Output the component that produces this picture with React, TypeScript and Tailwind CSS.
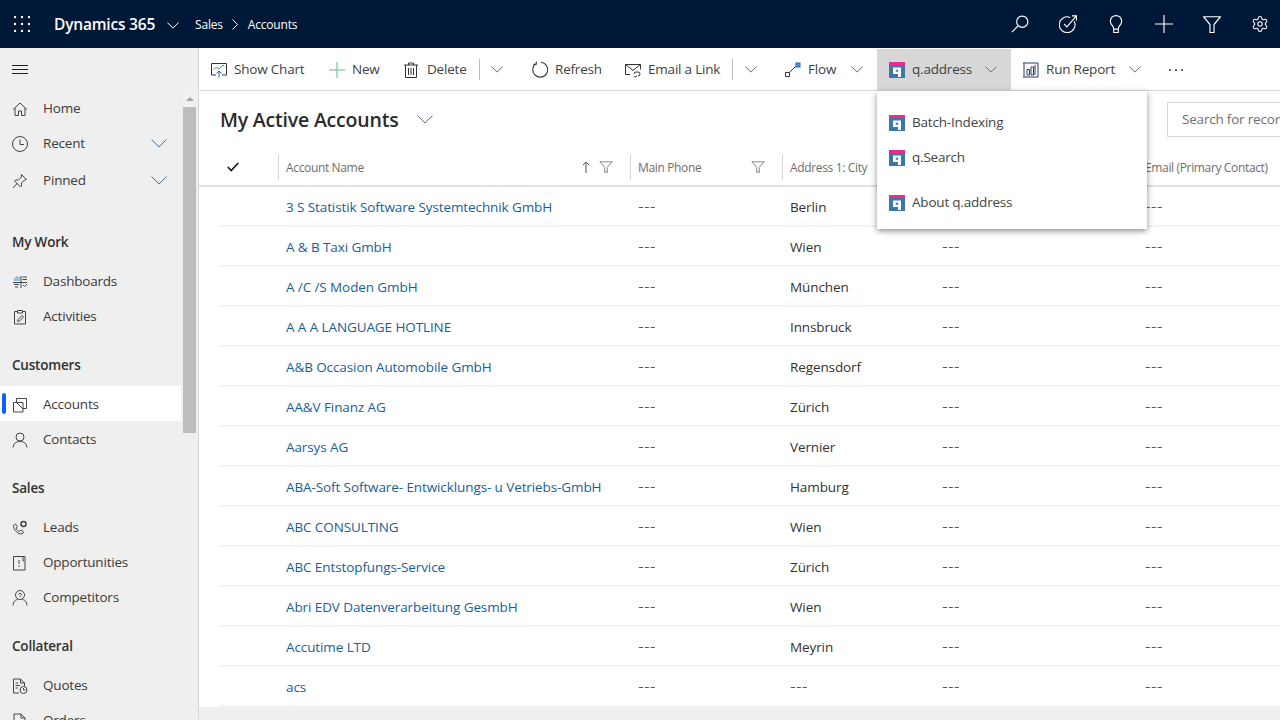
import type { ReactNode } from "react";
import { Settings } from "lucide-react";

function Ico({ size = 16, children, className = "" }: { size?: number; children: ReactNode; className?: string }) {
  return (
    <svg width={size} height={size} viewBox="0 0 16 16" fill="none" stroke="currentColor" strokeWidth="1" className={"shrink-0 " + className}>
      {children}
    </svg>
  );
}

function Chevron({ w = 12, className = "" }: { w?: number; className?: string }) {
  return (
    <svg width={w} height={w / 2 + 1} viewBox="0 0 16 9" fill="none" stroke="currentColor" strokeWidth={16 / w} className={"shrink-0 " + className}>
      <path d="M0.5 0.5 L8 8 L15.5 0.5" />
    </svg>
  );
}

function QIcon() {
  return (
    <svg width="16" height="16" viewBox="0 0 16 16" className="shrink-0">
      <rect width="16" height="16" fill="#3b78a9" />
      <rect width="16" height="3" fill="#ee2a8a" />
      <path d="M4 5.500h8V15H9v-3H4z M6.800 7.800v2h2.400v-2z" fill="#fff" fillRule="evenodd" />
    </svg>
  );
}

const navIcons: Record<string, ReactNode> = {
  Home: <path d="M1 8.500 8 2l7 6.500M3 7v7.500h3.500V10h3v4.500H13V7" />,
  Recent: (
    <>
      <circle cx="8" cy="8" r="7.500" />
      <path d="M8 3.500V8.500H12" />
    </>
  ),
  Pinned: <path d="M1 15l4.500-5M9.500 1.500l5 5-2 .5-3 3 0 3-1 1-6-6 1-1 3 0 3-3z" />,
  Dashboards: (
    <>
      <path d="M1 8.500h14M9 2v12M10.500 3H15M10.500 5.500H15" />
      <path d="M3 3.500V7M5 2V7M7 3V7" stroke="#4a90c2" />
      <path d="M2 10.500H7M3 13h3M11 11l1.500 1.500L15 10" />
    </>
  ),
  Activities: (
    <>
      <path d="M5 2.500H2.500V15h11V2.500H11M5.500 1.500h5v2.500h-5z" />
      <path d="M5.500 12.500l.5-2 4-4 1.500 1.500-4 4z" />
    </>
  ),
  Accounts: <path d="M1.500 5.500H11V15H1.500zM4.500 5.500V1.500H14.500V11.500H11M4.500 5.500 11 12" />,
  Contacts: (
    <>
      <circle cx="8" cy="5" r="4" />
      <path d="M1 15.500C1.500 11.500 4 9.500 8 9.500s6.500 2 7 6" />
    </>
  ),
  Leads: (
    <>
      <path d="M1.500 5.500 3.500 4l2 2.500-1.500 1.500c.5 1.500 2 3 3.500 3.500l1.500-1.500 2.500 2-1.500 2C6 14.500 1.500 10 1.500 5.500z" />
      <circle cx="11.500" cy="4" r="2.500" strokeWidth="1.500" />
    </>
  ),
  Opportunities: <path d="M11 1.500H1.500V15H13V1.500H11V6l1 0M7 5v4M7 10.500V12" />,
  Competitors: (
    <>
      <circle cx="8" cy="5" r="4.500" />
      <path d="M1 15.500C1.500 11.500 3 10 5.500 9.500M15 15.500c-.5-4-2-5.500-4.500-6M6.500 4.500C6.500 3 9.500 3 9.500 4.500 9.500 5.500 8 5.500 8 7" />
    </>
  ),
  Quotes: (
    <>
      <path d="M7 15H1.500V1h7l4 4v3M8.500 1v4h4M3.500 5H6M3.500 7.500H8M3.500 10H6" />
      <circle cx="11.500" cy="12" r="3.500" />
      <path d="M11.500 10v2h2" />
    </>
  ),
  Orders: (
    <>
      <path d="M2 15V1h7l4 4v10zM9 1v4h4M4.500 7.500h6M4.500 10h6" />
    </>
  ),
};

const groups = [
  { title: "My Work", items: ["Dashboards", "Activities"] },
  { title: "Customers", items: ["Accounts", "Contacts"] },
  { title: "Sales", items: ["Leads", "Opportunities", "Competitors"] },
  { title: "Collateral", items: ["Quotes", "Orders"] },
];

function NavRow({ name, active, arrow }: { name: string; active?: boolean; arrow?: boolean }) {
  return (
    <div className={"relative flex h-[35px] items-center pt-[2px] pl-[12px] pr-[14px] text-[#3b3a39] " + (active ? "bg-white" : "")}>
      {active && <div className="absolute left-[2px] top-[7px] h-[21px] w-[4px] rounded-sm bg-[#0f62fe]" />}
      <Ico className="text-[#444]">{navIcons[name]}</Ico>
      <span className="ml-[15px]">{name}</span>
      {arrow && <Chevron w={16} className="ml-auto text-[#4f6f8f]" />}
    </div>
  );
}

function Sidebar() {
  return (
    <aside className="flex w-[199px] shrink-0 flex-col border-r border-[#d8d8d8] bg-[#efefef] text-[13.5px]">
      <div className="flex h-[42px] items-center pt-[2px] pl-[12px]">
        <svg width="16" height="10" viewBox="0 0 16 10" stroke="#222" strokeWidth="1" className="shrink-0">
          <path d="M0 .5h16M0 4.500h16M0 8.500h16" />
        </svg>
      </div>
      <div className="flex min-h-0 flex-1">
        <div className="w-[181px] shrink-0">
          <NavRow name="Home" />
          <NavRow name="Recent" arrow />
          <div className="mt-[2px]">
            <NavRow name="Pinned" arrow />
          </div>
          <div className="mt-[27px]">
            {groups.map((g, i) => (
              <div key={g.title} className={i > 0 ? "mt-[14px]" : ""}>
                <div className="mb-[4px] flex h-[35px] items-center pt-[2px] pl-[12px] font-semibold text-[#323130]">{g.title}</div>
                {g.items.map((n) => (
                  <NavRow key={n} name={n} active={n === "Accounts"} />
                ))}
              </div>
            ))}
          </div>
        </div>
        <div className="ml-[2px] flex w-[13px] shrink-0 flex-col">
          <div className="flex h-[17px] items-center justify-center bg-[#f1f1f1]">
            <div className="h-0 w-0 border-x-[4px] border-b-[4px] border-x-transparent border-b-[#a6a6a6]" />
          </div>
          <div className="h-[326px] bg-[#bdbdbd]" />
        </div>
      </div>
    </aside>
  );
}

function Tool({ w, icon, label, chevron, active }: { w: number; icon: ReactNode; label: string; chevron?: boolean; active?: boolean }) {
  return (
    <div style={{ width: w }} className={"flex h-full shrink-0 items-center pl-[12px] " + (active ? "bg-[#d7d7d7]" : "")}>
      {icon}
      <span className="ml-[7px] whitespace-nowrap">{label}</span>
      {chevron && <Chevron className="ml-auto mr-[14px] text-[#5a6f86]" />}
    </div>
  );
}

function Sep() {
  return <div className="h-[21px] w-px shrink-0 bg-[#bdbdbd]" />;
}

function Toolbar() {
  return (
    <div className="flex h-[43px] shrink-0 items-center border-b border-[#d8d8d8] bg-white pt-px text-[13.5px] text-[#3f3f3f]">
      <Tool
        w={118}
        label="Show Chart"
        icon={
          <Ico className="text-[#333]">
            <path d="M5 13H.5V1.500h15V13H11" />
            <path d="M2.500 8l3-3 2.500 2 4-4 1.500 1.500" stroke="#3aa655" />
            <path d="M8 15.500V9M5.500 11.500 8 9l2.500 2.500" stroke="#1464b4" />
          </Ico>
        }
      />
      <Tool
        w={75}
        label="New"
        icon={
          <Ico className="text-[#8fd3a6]" size={16}>
            <path d="M8 0v16M0 8h16" strokeWidth="1.500" />
          </Ico>
        }
      />
      <Tool
        w={87}
        label="Delete"
        icon={
          <Ico className="-ml-px mr-px text-[#333]">
            <path d="M1 3h14M5.500 3V1h5v2M2.500 3v12.500h11V3M5.500 6v7M8 6v7M10.500 6v7" />
          </Ico>
        }
      />
      <Sep />
      <div className="flex w-[40px] shrink-0 pl-[11px]">
        <Chevron className="text-[#5a6f86]" />
      </div>
      <Tool
        w={93}
        label="Refresh"
        icon={
          <Ico className="-ml-[1px] text-[#333]" size={17}>
            <path d="M5 2.200A7 7 0 1 0 9.500 1.200M5 .5v2.500H2" />
          </Ico>
        }
      />
      <Tool
        w={119}
        label="Email a Link"
        icon={
          <Ico className="text-[#333]">
            <path d="M5 12.500H.5v-10h15v5M.5 2.500 8 8.500l7.500-6" />
            <path d="M9 12a2 2 0 0 1 2-2h2a2 2 0 0 1 0 4M12 13.500a2 2 0 0 1-2 1.500 2 2 0 0 1-1-1" />
          </Ico>
        }
      />
      <Sep />
      <div className="flex w-[40px] shrink-0 pl-[12px]">
        <Chevron className="text-[#5a6f86]" />
      </div>
      <Tool
        w={104}
        label="Flow"
        chevron
        icon={
          <Ico className="text-[#333]">
            <path d="M.5 10.500h4v4h-4zM4.500 10.500l6-6" />
            <rect x="11" y="1" width="4" height="4" fill="#4a9ad4" stroke="#2266aa" />
          </Ico>
        }
      />
      <Tool w={134} label="q.address" chevron active icon={<QIcon />} />
      <Tool
        w={144}
        label="Run Report"
        chevron
        icon={
          <Ico className="text-[#2b3a6b]">
            <path d="M1 1h14v14H1M1 1H0M1 15H0M1 1v14" />
            <path d="M4 7.500h2.500V13H4zM8 5h2.500v8H8zM12 3v10" />
          </Ico>
        }
      />
      <div className="ml-[14px] flex items-center gap-[4px]">
        <div className="h-[2px] w-[2px] rounded-full bg-[#333]" />
        <div className="h-[2px] w-[2px] rounded-full bg-[#333]" />
        <div className="h-[2px] w-[2px] rounded-full bg-[#333]" />
      </div>
    </div>
  );
}

const rows = [
  ["3 S Statistik Software Systemtechnik GmbH", "Berlin"],
  ["A & B Taxi GmbH", "Wien"],
  ["A /C /S Moden GmbH", "München"],
  ["A A A LANGUAGE HOTLINE", "Innsbruck"],
  ["A&B Occasion Automobile GmbH", "Regensdorf"],
  ["AA&V Finanz AG", "Zürich"],
  ["Aarsys AG", "Vernier"],
  ["ABA-Soft Software- Entwicklungs- u Vetriebs-GmbH", "Hamburg"],
  ["ABC CONSULTING", "Wien"],
  ["ABC Entstopfungs-Service", "Zürich"],
  ["Abri EDV Datenverarbeitung GesmbH", "Wien"],
  ["Accutime LTD", "Meyrin"],
  ["acs", "---"],
];

function Funnel() {
  return (
    <Ico size={14} className="text-[#777]">
      <path d="M1 2h14L9.500 8.500V14h-3V8.500z" />
    </Ico>
  );
}

function HeadCell({ w, label, children, last }: { w: number; label: string; children?: ReactNode; last?: boolean }) {
  return (
    <div style={{ width: w }} className="flex h-[26px] shrink-0 items-center pl-[7px]">
      <span className="flex-1 pt-[2px] whitespace-nowrap">{label}</span>
      {children}
      {!last && <div className="h-[26px] w-px shrink-0 bg-[#d8d8d8]" />}
    </div>
  );
}

function Dashes() {
  return <span className="text-[17px] leading-none font-light tracking-[0.5px]">---</span>;
}

function Grid() {
  return (
    <div className="flex min-h-0 flex-1 flex-col bg-white">
      <div className="flex h-[57px] shrink-0 items-center">
        <div className="flex w-[968px] shrink-0 items-center pl-[21px]">
          <span className="text-[19.5px] font-semibold text-[#2b2b2b]">My Active Accounts</span>
          <Chevron w={16} className="ml-[19px] text-[#4f6f8f]" />
        </div>
        <div className="flex h-[35px] w-[200px] shrink-0 items-center border border-[#d8d8d8] pl-[14px] text-[13.5px] whitespace-nowrap text-[#707070]">
          Search for records
        </div>
      </div>
      <div className="flex h-[39px] shrink-0 items-center border-b-2 border-[#e2e2e2] text-[12px] tracking-[-0.35px] text-[#6e6e6e]">
        <div className="flex h-[26px] w-[80px] shrink-0 items-center">
          <svg width="12" height="10" viewBox="0 0 12 10" fill="none" stroke="#111" strokeWidth="1.600" className="ml-[28px] shrink-0">
            <path d="M.8 5 4.200 8.500 11.200 1" />
          </svg>
          <div className="ml-auto h-[26px] w-px bg-[#d8d8d8]" />
        </div>
        <HeadCell w={352} label="Account Name">
          <div className="mr-[17px] flex items-center gap-[9px]">
            <svg width="8" height="12" viewBox="0 0 8 12" fill="none" stroke="#555" strokeWidth="1" className="shrink-0">
              <path d="M4 12V1M1 4l3-3 3 3" />
            </svg>
            <Funnel />
          </div>
        </HeadCell>
        <HeadCell w={152} label="Main Phone">
          <div className="mr-[17px]">
            <Funnel />
          </div>
        </HeadCell>
        <HeadCell w={152} label="Address 1: City" />
        <HeadCell w={203} label="" />
        <HeadCell w={140} label="Email (Primary Contact)" last />
      </div>
      <div className="h-[520px] shrink-0 text-[13.5px] tracking-[-0.1px] text-[#333]">
        {rows.map(([name, city], i) => (
          <div key={name} className="ml-[20px] flex h-[40px] items-center border-b-2 border-[#f3f3f3] pt-[2px]">
            <div className="w-[67px] shrink-0" />
            <div className="w-[352px] shrink-0 whitespace-nowrap text-[#18609b]">{name}</div>
            <div className="w-[152px] shrink-0">
              <Dashes />
            </div>
            <div className="w-[152px] shrink-0">{city === "---" ? <Dashes /> : city}</div>
            <div className="w-[203px] shrink-0">{i > 0 && <Dashes />}</div>
            <div className="shrink-0">
              <Dashes />
            </div>
          </div>
        ))}
      </div>
      <div className="flex-1 bg-[#efefef]" />
    </div>
  );
}

function Menu() {
  const Item = ({ label, className = "" }: { label: string; className?: string }) => (
    <div className={"flex h-[35px] items-center pl-[12px] " + className}>
      <QIcon />
      <span className="ml-[7px]">{label}</span>
    </div>
  );
  return (
    <div className="absolute left-[678px] top-[43px] z-10 w-[270px] bg-white pt-[14px] pb-[9px] text-[13.5px] text-[#444] shadow-[0_2px_6px_rgba(0,0,0,0.45)]">
      <Item label="Batch-Indexing" />
      <Item label="q.Search" />
      <Item label="About q.address" className="mt-[10px]" />
    </div>
  );
}

export default function App() {
  return (
    <div className="flex h-screen flex-col overflow-hidden font-['Open_Sans',sans-serif] tracking-[-0.2px]">
      <header className="flex h-12 shrink-0 items-center bg-[#001838] text-white">
        <svg width="16" height="16" viewBox="0 0 16 16" fill="#fff" className="ml-[14px] shrink-0">
          {[1, 8, 15].map((y) => [1, 8, 15].map((x) => <circle key={x + "-" + y} cx={x} cy={y} r="1.200" />))}
        </svg>
        <span className="ml-[24px] pt-[2px] text-[15.5px] font-semibold">Dynamics 365</span>
        <Chevron className="ml-[12px] mt-[2px]" />
        <span className="ml-[16px] pt-[2px] text-[12px]">Sales</span>
        <svg width="6" height="11" viewBox="0 0 6 11" fill="none" stroke="#fff" strokeWidth="1" className="ml-[9px] shrink-0">
          <path d="M.5.5 5.500 5.500.5 10.500" />
        </svg>
        <span className="ml-[10px] pt-[2px] text-[12px]">Accounts</span>
        <div className="-mr-1 ml-auto flex">
          {[
            <Ico size={18} key="s"><path d="M.8 15.200 6 10" /><circle cx="10" cy="6" r="5" /></Ico>,
            <Ico size={18} key="t"><path d="M13.500 5.500A7 7 0 1 1 10 2.200M4.500 8 7 10.500 15.500.8M11.500.8h4v4" /></Ico>,
            <Ico size={18} key="b"><path d="M6 12.500h4V15.500H6zM6 12.500C6 9.500 3 9 3 5.500a5 5 0 0 1 10 0C13 9 10 9.500 10 12.500" /></Ico>,
            <Ico size={18} key="p"><path d="M8 0v16M0 8h16" /></Ico>,
            <Ico size={18} key="f"><path d="M.5 1.500h15L9.800 8.500v7H6.200v-7z" /></Ico>,
            <Settings key="g" size={18} strokeWidth={1.400} />,
          ].map((ic, i) => (
            <div key={i} className="flex h-12 w-12 items-center justify-center">{ic}</div>
          ))}
        </div>
      </header>
      <div className="flex min-h-0 flex-1">
        <Sidebar />
        <main className="relative min-w-0 flex-1 overflow-x-clip">
          <div className="flex h-full flex-col overflow-hidden">
            <Toolbar />
            <Grid />
          </div>
          <Menu />
        </main>
      </div>
    </div>
  );
}
